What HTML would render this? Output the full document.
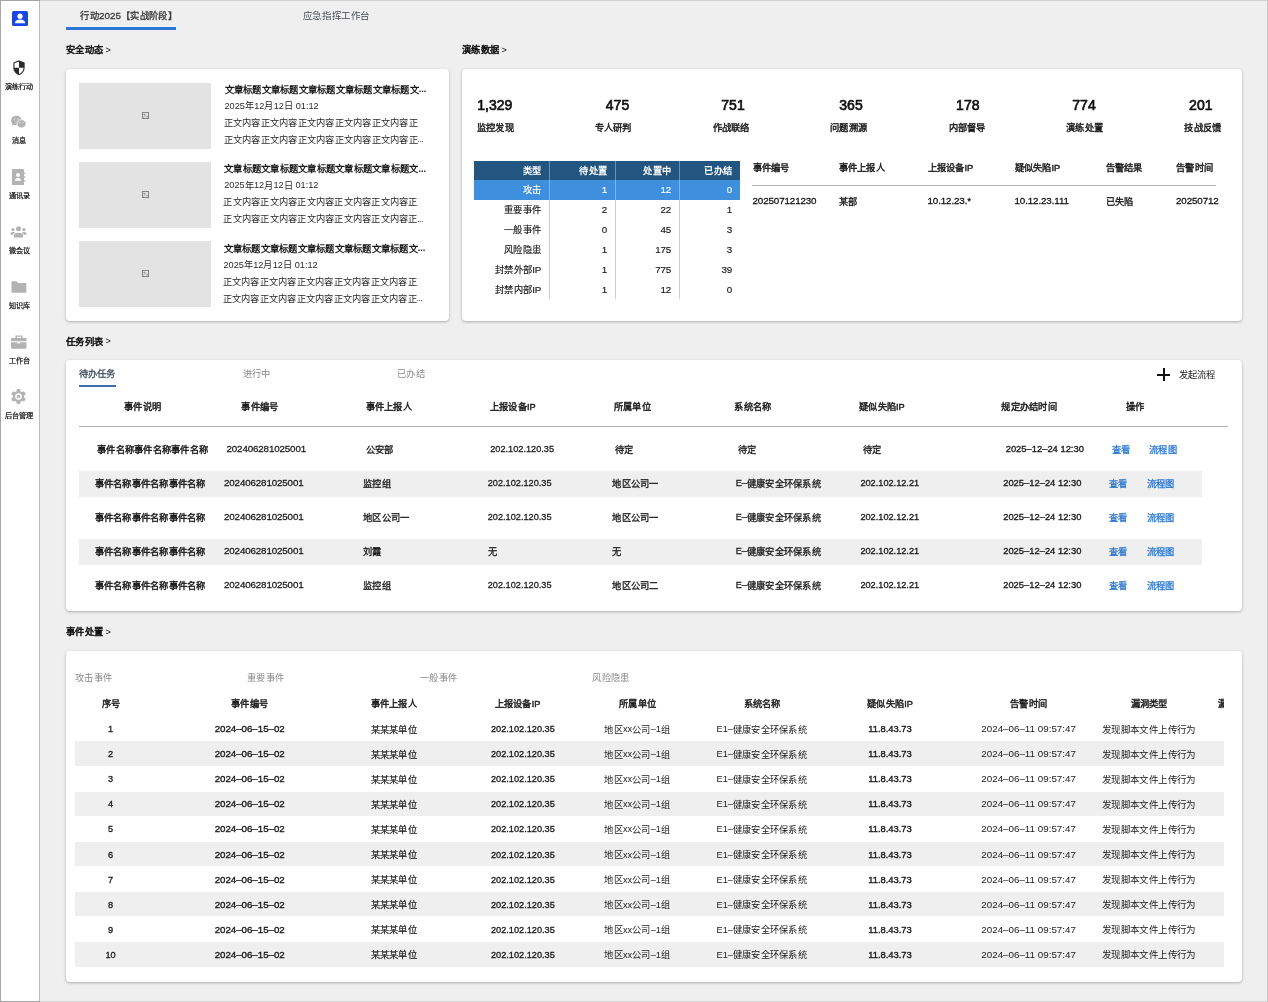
<!DOCTYPE html>
<html lang="zh-CN"><head><meta charset="utf-8"><style>
html,body{margin:0;padding:0;}
body{width:1268px;height:1002px;position:relative;overflow:hidden;font-family:"Liberation Sans",sans-serif;background:#efefef;}
.t{position:absolute;white-space:nowrap;line-height:16px;height:16px;font-size:9.2px;}
svg{display:block;}
</style></head><body>
<div id="root" style="position:absolute;left:0;top:0;width:1268px;height:1002px;will-change:transform;">
<div style="position:absolute;left:1px;top:1px;width:38px;height:1000px;background:#fff;"></div>
<div style="position:absolute;left:0px;top:0px;width:40px;height:1px;background:#a4a4a4;"></div>
<div style="position:absolute;left:0px;top:1001px;width:40px;height:1px;background:#a4a4a4;"></div>
<div style="position:absolute;left:0px;top:0px;width:1px;height:1002px;background:#a8a8a8;"></div>
<div style="position:absolute;left:39px;top:1px;width:1px;height:1000px;background:#bcbcbc;"></div>
<div style="position:absolute;left:40px;top:0px;width:1228px;height:1px;background:#d2d2d2;"></div>
<div style="position:absolute;left:40px;top:1001px;width:1228px;height:1px;background:#d6d6d6;"></div>
<div style="position:absolute;left:1267px;top:0px;width:1px;height:1002px;background:#c8c8c8;"></div>
<svg style="position:absolute;left:12px;top:11px" width="16" height="15" viewBox="0 0 16 15">
<rect x="0" y="0" width="16" height="15" rx="1.5" fill="#1947e6"/>
<circle cx="8" cy="5.2" r="2.6" fill="#fff"/>
<path d="M2.8 12.2 C3.2 9.4 5.4 8.6 8 8.6 C10.6 8.6 12.8 9.4 13.2 12.2 Z" fill="#fff"/>
</svg>
<svg style="position:absolute;left:12.6px;top:59.6px" width="12" height="15.7" viewBox="0 0 13 17">
<path d="M6.5 1 L12 3 L12 8.5 C12 12 9.5 14.5 6.5 16 C3.5 14.5 1 12 1 8.5 L1 3 Z" fill="#fff" stroke="#2b2b2b" stroke-width="1.2"/>
<path d="M6.5 1 L12 3 L12 8.5 L6.5 8.5 Z" fill="#2b2b2b"/>
<path d="M6.5 8.5 L6.5 16 C3.5 14.5 1 12 1 8.5 Z" fill="#2b2b2b"/>
</svg>
<svg style="position:absolute;left:10px;top:115px" width="17" height="14" viewBox="0 0 17 14">
<ellipse cx="6.3" cy="5.5" rx="5.3" ry="4.8" fill="#b3b3b3"/>
<path d="M2.5 8.5 L1.8 10.8 L4.5 9.3 Z" fill="#b3b3b3"/>
<ellipse cx="11.5" cy="8.8" rx="4.6" ry="4.1" fill="#b3b3b3" stroke="#fff" stroke-width="0.8"/>
<circle cx="4.3" cy="4" r="0.6" fill="#fff"/><circle cx="7.8" cy="4" r="0.6" fill="#fff"/>
<circle cx="10" cy="7.8" r="0.5" fill="#fff"/><circle cx="13" cy="7.8" r="0.5" fill="#fff"/>
</svg>
<svg style="position:absolute;left:12px;top:169px" width="14" height="16" viewBox="0 0 14 16">
<rect x="0" y="0" width="12" height="16" rx="0.8" fill="#b3b3b3"/>
<rect x="12" y="3.5" width="1.4" height="1.6" rx="0.6" fill="#b3b3b3"/>
<rect x="12" y="7.3" width="1.4" height="1.6" rx="0.6" fill="#b3b3b3"/>
<rect x="12" y="11" width="1.4" height="1.6" rx="0.6" fill="#b3b3b3"/>
<circle cx="6" cy="6" r="2" fill="#fff"/>
<path d="M2.8 11.8 C3 9.6 4.5 9 6 9 C7.5 9 9 9.6 9.2 11.8 Z" fill="#fff"/>
</svg>
<svg style="position:absolute;left:10px;top:225px" width="17" height="13" viewBox="0 0 17 13">
<circle cx="8.5" cy="3.8" r="2.5" fill="#b3b3b3"/>
<circle cx="3" cy="4.6" r="1.6" fill="#b3b3b3"/>
<circle cx="14" cy="4.6" r="1.6" fill="#b3b3b3"/>
<path d="M4 12.6 L4 10.2 C4 8.6 5.8 7.8 8.5 7.8 C11.2 7.8 13 8.6 13 10.2 L13 12.6 Z" fill="#b3b3b3"/>
<path d="M0.6 9.8 L0.6 8.4 C0.6 7.4 1.6 6.9 3.1 6.9 C4.1 6.9 4.8 7 5.3 7.3 C4 7.9 3.4 8.8 3.4 9.8 Z" fill="#b3b3b3"/>
<path d="M16.4 9.8 L16.4 8.4 C16.4 7.4 15.4 6.9 13.9 6.9 C12.9 6.9 12.2 7 11.7 7.3 C13 7.9 13.6 8.8 13.6 9.8 Z" fill="#b3b3b3"/>
</svg>
<svg style="position:absolute;left:11px;top:281px" width="16" height="12" viewBox="0 0 16 12">
<path d="M0.5 0.3 L5.5 0.3 L7 2 L15.3 2 L15.3 11.7 L0.5 11.7 Z" fill="#b3b3b3"/>
</svg>
<svg style="position:absolute;left:11px;top:335px" width="16" height="14" viewBox="0 0 16 14">
<path d="M4.5 3 L4.5 0.5 L11.5 0.5 L11.5 3 L10 3 L10 1.8 L6 1.8 L6 3 Z" fill="#b3b3b3"/>
<rect x="0" y="3" width="15.5" height="3.3" rx="0.5" fill="#b3b3b3"/>
<path d="M0 7.2 L6.3 7.2 L6.3 8.6 L9.2 8.6 L9.2 7.2 L15.5 7.2 L15.5 12.8 C15.5 13.4 15.1 13.8 14.5 13.8 L1 13.8 C0.4 13.8 0 13.4 0 12.8 Z" fill="#b3b3b3"/>
</svg>
<svg style="position:absolute;left:11px;top:389px" width="15" height="15" viewBox="-7.5 -7.5 15 15">
<g fill="#b3b3b3"><rect x="-1.9" y="-7.5" width="3.8" height="4" rx="0.9" transform="rotate(0)"/><rect x="-1.9" y="-7.5" width="3.8" height="4" rx="0.9" transform="rotate(60)"/><rect x="-1.9" y="-7.5" width="3.8" height="4" rx="0.9" transform="rotate(120)"/><rect x="-1.9" y="-7.5" width="3.8" height="4" rx="0.9" transform="rotate(180)"/><rect x="-1.9" y="-7.5" width="3.8" height="4" rx="0.9" transform="rotate(240)"/><rect x="-1.9" y="-7.5" width="3.8" height="4" rx="0.9" transform="rotate(300)"/>
<circle cx="0" cy="0" r="5.6"/></g>
<circle cx="0" cy="0" r="3.3" fill="#fff"/><circle cx="0" cy="0" r="1.8" fill="#b3b3b3"/>
</svg>
<div class="t" style="left:0.3000000000000007px;width:38px;text-align:center;top:77.5px;color:#111;-webkit-text-stroke:0.22px #111;"><span style="font-size:7.1px;letter-spacing:0.1px">演练行动</span></div>
<div class="t" style="left:0.3000000000000007px;width:38px;text-align:center;top:132.0px;color:#111;-webkit-text-stroke:0.22px #111;"><span style="font-size:7.1px;letter-spacing:0.1px">消息</span></div>
<div class="t" style="left:0.3000000000000007px;width:38px;text-align:center;top:187.0px;color:#111;-webkit-text-stroke:0.22px #111;"><span style="font-size:7.1px;letter-spacing:0.1px">通讯录</span></div>
<div class="t" style="left:0.3000000000000007px;width:38px;text-align:center;top:242.0px;color:#111;-webkit-text-stroke:0.22px #111;"><span style="font-size:7.1px;letter-spacing:0.1px">微会议</span></div>
<div class="t" style="left:0.3000000000000007px;width:38px;text-align:center;top:297.0px;color:#111;-webkit-text-stroke:0.22px #111;"><span style="font-size:7.1px;letter-spacing:0.1px">知识库</span></div>
<div class="t" style="left:0.3000000000000007px;width:38px;text-align:center;top:352.0px;color:#111;-webkit-text-stroke:0.22px #111;"><span style="font-size:7.1px;letter-spacing:0.1px">工作台</span></div>
<div class="t" style="left:0.3000000000000007px;width:38px;text-align:center;top:406.5px;color:#111;-webkit-text-stroke:0.22px #111;"><span style="font-size:7.1px;letter-spacing:0.1px">后台管理</span></div>
<div class="t" style="left:28.69999999999999px;width:200px;text-align:center;top:8.0px;color:#3a3a3a;-webkit-text-stroke:0.32px #3a3a3a;"><span style="font-size:9.25px;letter-spacing:0.35px">行动</span><span style="font-size:9.9px;letter-spacing:0px;position:relative;top:-0.5px">2025</span><span style="font-size:9.25px;letter-spacing:0.35px">【实战阶段】</span></div>
<div style="position:absolute;left:66px;top:27px;width:110px;height:3px;background:#2a77d6;"></div>
<div class="t" style="left:236.5px;width:200px;text-align:center;top:8.0px;color:#4a4f55;"><span style="font-size:9.5px;letter-spacing:-0.4px">应急指挥工作台</span></div>
<div class="t" style="left:66px;top:42.0px;color:#111;-webkit-text-stroke:0.52px #111;"><span style="font-size:9.25px;letter-spacing:0.25px">安全动态</span><span style="font-size:9.2px;letter-spacing:0px;position:relative;top:-0.5px"> <b style="font-weight:400;-webkit-text-stroke:0">&gt;</b></span></div>
<div class="t" style="left:462px;top:42.0px;color:#111;-webkit-text-stroke:0.52px #111;"><span style="font-size:9.25px;letter-spacing:0.25px">演练数据</span><span style="font-size:9.2px;letter-spacing:0px;position:relative;top:-0.5px"> <b style="font-weight:400;-webkit-text-stroke:0">&gt;</b></span></div>
<div class="t" style="left:66px;top:333.5px;color:#111;-webkit-text-stroke:0.52px #111;"><span style="font-size:9.25px;letter-spacing:0.25px">任务列表</span><span style="font-size:9.2px;letter-spacing:0px;position:relative;top:-0.5px"> <b style="font-weight:400;-webkit-text-stroke:0">&gt;</b></span></div>
<div class="t" style="left:66px;top:624.0px;color:#111;-webkit-text-stroke:0.52px #111;"><span style="font-size:9.25px;letter-spacing:0.25px">事件处置</span><span style="font-size:9.2px;letter-spacing:0px;position:relative;top:-0.5px"> <b style="font-weight:400;-webkit-text-stroke:0">&gt;</b></span></div>
<div style="position:absolute;left:66px;top:69px;width:383px;height:251.5px;background:#fff;border-radius:4px;box-shadow:0 1px 3px rgba(0,0,0,0.28);"></div>
<div style="position:absolute;left:462px;top:69px;width:780px;height:251.5px;background:#fff;border-radius:4px;box-shadow:0 1px 3px rgba(0,0,0,0.28);"></div>
<div style="position:absolute;left:66px;top:360px;width:1176px;height:250.5px;background:#fff;border-radius:4px;box-shadow:0 1px 3px rgba(0,0,0,0.28);"></div>
<div style="position:absolute;left:66px;top:651px;width:1176px;height:330.5px;background:#fff;border-radius:4px;box-shadow:0 1px 3px rgba(0,0,0,0.28);"></div>
<div style="position:absolute;left:79px;top:83px;width:132px;height:66px;background:#e3e3e3;"></div>
<svg style="position:absolute;left:142px;top:112px" width="7" height="7" viewBox="0 0 7 7"><rect x="0.45" y="0.45" width="6.1" height="6.1" fill="none" stroke="#7d7d7d" stroke-width="0.9"/><path d="M0.8 6 L4.2 2.3" fill="none" stroke="#9a9a9a" stroke-width="0.7"/><path d="M3.6 5.2 L6.2 5.2 L6.2 4.3 L4.6 4.3 Z" fill="#8a8a8a"/><circle cx="2.2" cy="2.4" r="0.75" fill="#7d7d7d"/></svg>
<div class="t" style="left:224.5px;top:81.7px;font-weight:700;color:#1a1a1a;"><span style="font-size:9.25px;letter-spacing:0.25px">文章标题文章标题文章标题文章标题文章标题文</span><span style="font-size:9.2px;letter-spacing:0px;position:relative;top:-0.5px">...</span></div>
<div class="t" style="left:224.5px;top:98.0px;color:#2a2a2a;"><span style="font-size:9.2px;letter-spacing:0px;position:relative;top:-0.5px">2025</span><span style="font-size:9.25px;letter-spacing:0.25px">年</span><span style="font-size:9.2px;letter-spacing:0px;position:relative;top:-0.5px">12</span><span style="font-size:9.25px;letter-spacing:0.25px">月</span><span style="font-size:9.2px;letter-spacing:0px;position:relative;top:-0.5px">12</span><span style="font-size:9.25px;letter-spacing:0.25px">日</span><span style="font-size:9.2px;letter-spacing:0px;position:relative;top:-0.5px"> 01:12</span></div>
<div class="t" style="left:223.7px;top:114.5px;color:#2a2a2a;"><span style="font-size:9.25px;letter-spacing:0.25px">正文内容正文内容正文内容正文内容正文内容正</span></div>
<div class="t" style="left:223.7px;top:131.5px;color:#2a2a2a;"><span style="font-size:9.25px;letter-spacing:0.25px">正文内容正文内容正文内容正文内容正文内容正</span></div>
<div class="t" style="left:417.5px;top:131.5px;color:#2a2a2a;"><span style="font-size:8.4px;letter-spacing:-0.4px;position:relative;top:-0.5px">...</span></div>
<div style="position:absolute;left:79px;top:162px;width:132px;height:66px;background:#e3e3e3;"></div>
<svg style="position:absolute;left:142px;top:191px" width="7" height="7" viewBox="0 0 7 7"><rect x="0.45" y="0.45" width="6.1" height="6.1" fill="none" stroke="#7d7d7d" stroke-width="0.9"/><path d="M0.8 6 L4.2 2.3" fill="none" stroke="#9a9a9a" stroke-width="0.7"/><path d="M3.6 5.2 L6.2 5.2 L6.2 4.3 L4.6 4.3 Z" fill="#8a8a8a"/><circle cx="2.2" cy="2.4" r="0.75" fill="#7d7d7d"/></svg>
<div class="t" style="left:224.2px;top:161.29999999999998px;font-weight:700;color:#1a1a1a;"><span style="font-size:9.25px;letter-spacing:0.25px">文章标题文章标题文章标题文章标题文章标题文</span><span style="font-size:9.2px;letter-spacing:0px;position:relative;top:-0.5px">...</span></div>
<div class="t" style="left:224.2px;top:177.6px;color:#2a2a2a;"><span style="font-size:9.2px;letter-spacing:0px;position:relative;top:-0.5px">2025</span><span style="font-size:9.25px;letter-spacing:0.25px">年</span><span style="font-size:9.2px;letter-spacing:0px;position:relative;top:-0.5px">12</span><span style="font-size:9.25px;letter-spacing:0.25px">月</span><span style="font-size:9.2px;letter-spacing:0px;position:relative;top:-0.5px">12</span><span style="font-size:9.25px;letter-spacing:0.25px">日</span><span style="font-size:9.2px;letter-spacing:0px;position:relative;top:-0.5px"> 01:12</span></div>
<div class="t" style="left:223.39999999999998px;top:194.1px;color:#2a2a2a;"><span style="font-size:9.25px;letter-spacing:0.25px">正文内容正文内容正文内容正文内容正文内容正</span></div>
<div class="t" style="left:223.39999999999998px;top:211.1px;color:#2a2a2a;"><span style="font-size:9.25px;letter-spacing:0.25px">正文内容正文内容正文内容正文内容正文内容正</span></div>
<div class="t" style="left:417.2px;top:211.1px;color:#2a2a2a;"><span style="font-size:8.4px;letter-spacing:-0.4px;position:relative;top:-0.5px">...</span></div>
<div style="position:absolute;left:79px;top:241px;width:132px;height:66px;background:#e3e3e3;"></div>
<svg style="position:absolute;left:142px;top:270px" width="7" height="7" viewBox="0 0 7 7"><rect x="0.45" y="0.45" width="6.1" height="6.1" fill="none" stroke="#7d7d7d" stroke-width="0.9"/><path d="M0.8 6 L4.2 2.3" fill="none" stroke="#9a9a9a" stroke-width="0.7"/><path d="M3.6 5.2 L6.2 5.2 L6.2 4.3 L4.6 4.3 Z" fill="#8a8a8a"/><circle cx="2.2" cy="2.4" r="0.75" fill="#7d7d7d"/></svg>
<div class="t" style="left:223.5px;top:240.89999999999998px;font-weight:700;color:#1a1a1a;"><span style="font-size:9.25px;letter-spacing:0.25px">文章标题文章标题文章标题文章标题文章标题文</span><span style="font-size:9.2px;letter-spacing:0px;position:relative;top:-0.5px">...</span></div>
<div class="t" style="left:223.5px;top:257.2px;color:#2a2a2a;"><span style="font-size:9.2px;letter-spacing:0px;position:relative;top:-0.5px">2025</span><span style="font-size:9.25px;letter-spacing:0.25px">年</span><span style="font-size:9.2px;letter-spacing:0px;position:relative;top:-0.5px">12</span><span style="font-size:9.25px;letter-spacing:0.25px">月</span><span style="font-size:9.2px;letter-spacing:0px;position:relative;top:-0.5px">12</span><span style="font-size:9.25px;letter-spacing:0.25px">日</span><span style="font-size:9.2px;letter-spacing:0px;position:relative;top:-0.5px"> 01:12</span></div>
<div class="t" style="left:222.7px;top:273.7px;color:#2a2a2a;"><span style="font-size:9.25px;letter-spacing:0.25px">正文内容正文内容正文内容正文内容正文内容正</span></div>
<div class="t" style="left:222.7px;top:290.7px;color:#2a2a2a;"><span style="font-size:9.25px;letter-spacing:0.25px">正文内容正文内容正文内容正文内容正文内容正</span></div>
<div class="t" style="left:416.5px;top:290.7px;color:#2a2a2a;"><span style="font-size:8.4px;letter-spacing:-0.4px;position:relative;top:-0.5px">...</span></div>
<div class="t" style="left:444.8px;width:100px;text-align:center;top:97.6px;color:#111;-webkit-text-stroke:0.67px #111;"><span style="font-size:14px;letter-spacing:0px;position:relative;top:-0.5px">1,329</span></div>
<div class="t" style="left:445.3px;width:100px;text-align:center;top:119.5px;color:#1a1a1a;-webkit-text-stroke:0.42px #1a1a1a;"><span style="font-size:9.25px;letter-spacing:0.25px">监控发现</span></div>
<div class="t" style="left:567.5px;width:100px;text-align:center;top:97.6px;color:#111;-webkit-text-stroke:0.67px #111;"><span style="font-size:14px;letter-spacing:0px;position:relative;top:-0.5px">475</span></div>
<div class="t" style="left:563.0px;width:100px;text-align:center;top:119.5px;color:#1a1a1a;-webkit-text-stroke:0.42px #1a1a1a;"><span style="font-size:9.25px;letter-spacing:0.25px">专人研判</span></div>
<div class="t" style="left:683.0px;width:100px;text-align:center;top:97.6px;color:#111;-webkit-text-stroke:0.67px #111;"><span style="font-size:14px;letter-spacing:0px;position:relative;top:-0.5px">751</span></div>
<div class="t" style="left:681.0px;width:100px;text-align:center;top:119.5px;color:#1a1a1a;-webkit-text-stroke:0.42px #1a1a1a;"><span style="font-size:9.25px;letter-spacing:0.25px">作战联络</span></div>
<div class="t" style="left:801.0px;width:100px;text-align:center;top:97.6px;color:#111;-webkit-text-stroke:0.67px #111;"><span style="font-size:14px;letter-spacing:0px;position:relative;top:-0.5px">365</span></div>
<div class="t" style="left:798.5px;width:100px;text-align:center;top:119.5px;color:#1a1a1a;-webkit-text-stroke:0.42px #1a1a1a;"><span style="font-size:9.25px;letter-spacing:0.25px">问题溯源</span></div>
<div class="t" style="left:917.8px;width:100px;text-align:center;top:97.6px;color:#111;-webkit-text-stroke:0.67px #111;"><span style="font-size:14px;letter-spacing:0px;position:relative;top:-0.5px">178</span></div>
<div class="t" style="left:917.0px;width:100px;text-align:center;top:119.5px;color:#1a1a1a;-webkit-text-stroke:0.42px #1a1a1a;"><span style="font-size:9.25px;letter-spacing:0.25px">内部督导</span></div>
<div class="t" style="left:1034.0px;width:100px;text-align:center;top:97.6px;color:#111;-webkit-text-stroke:0.67px #111;"><span style="font-size:14px;letter-spacing:0px;position:relative;top:-0.5px">774</span></div>
<div class="t" style="left:1034.7px;width:100px;text-align:center;top:119.5px;color:#1a1a1a;-webkit-text-stroke:0.42px #1a1a1a;"><span style="font-size:9.25px;letter-spacing:0.25px">演练处置</span></div>
<div class="t" style="left:1150.8px;width:100px;text-align:center;top:97.6px;color:#111;-webkit-text-stroke:0.67px #111;"><span style="font-size:14px;letter-spacing:0px;position:relative;top:-0.5px">201</span></div>
<div class="t" style="left:1152.8px;width:100px;text-align:center;top:119.5px;color:#1a1a1a;-webkit-text-stroke:0.42px #1a1a1a;"><span style="font-size:9.25px;letter-spacing:0.25px">技战反馈</span></div>
<div style="position:absolute;left:474px;top:161px;width:266px;height:19px;background:#22557f;"></div>
<div style="position:absolute;left:474px;top:180px;width:266px;height:20px;background:#3f8fdf;"></div>
<div style="position:absolute;left:549px;top:161px;width:1px;height:19px;background:#6f8fab;"></div>
<div style="position:absolute;left:549px;top:180px;width:1px;height:20px;background:#86b7ea;"></div>
<div style="position:absolute;left:549px;top:200px;width:1px;height:99px;background:#cfcfcf;"></div>
<div style="position:absolute;left:615px;top:161px;width:1px;height:19px;background:#6f8fab;"></div>
<div style="position:absolute;left:615px;top:180px;width:1px;height:20px;background:#86b7ea;"></div>
<div style="position:absolute;left:615px;top:200px;width:1px;height:99px;background:#cfcfcf;"></div>
<div style="position:absolute;left:679px;top:161px;width:1px;height:19px;background:#6f8fab;"></div>
<div style="position:absolute;left:679px;top:180px;width:1px;height:20px;background:#86b7ea;"></div>
<div style="position:absolute;left:679px;top:200px;width:1px;height:99px;background:#cfcfcf;"></div>
<div class="t" style="left:471px;width:70px;text-align:right;top:162.5px;font-weight:700;color:#fff;"><span style="font-size:9.25px;letter-spacing:0.25px">类型</span></div>
<div class="t" style="left:537px;width:70px;text-align:right;top:162.5px;font-weight:700;color:#fff;"><span style="font-size:9.25px;letter-spacing:0.25px">待处置</span></div>
<div class="t" style="left:601px;width:70px;text-align:right;top:162.5px;font-weight:700;color:#fff;"><span style="font-size:9.25px;letter-spacing:0.25px">处置中</span></div>
<div class="t" style="left:662px;width:70px;text-align:right;top:162.5px;font-weight:700;color:#fff;"><span style="font-size:9.25px;letter-spacing:0.25px">已办结</span></div>
<div class="t" style="left:471px;width:70px;text-align:right;top:182.0px;color:#fff;-webkit-text-stroke:0.17px #fff;"><span style="font-size:9.25px;letter-spacing:0.25px">攻击</span></div>
<div class="t" style="left:537px;width:70px;text-align:right;top:182.0px;color:#fff;-webkit-text-stroke:0.17px #fff;"><span style="font-size:9.8px;letter-spacing:-0.2px;position:relative;top:-0.5px">1</span></div>
<div class="t" style="left:601px;width:70px;text-align:right;top:182.0px;color:#fff;-webkit-text-stroke:0.17px #fff;"><span style="font-size:9.8px;letter-spacing:-0.2px;position:relative;top:-0.5px">12</span></div>
<div class="t" style="left:662px;width:70px;text-align:right;top:182.0px;color:#fff;-webkit-text-stroke:0.17px #fff;"><span style="font-size:9.8px;letter-spacing:-0.2px;position:relative;top:-0.5px">0</span></div>
<div class="t" style="left:471px;width:70px;text-align:right;top:202.0px;color:#1a1a1a;-webkit-text-stroke:0.17px #1a1a1a;"><span style="font-size:9.25px;letter-spacing:0.25px">重要事件</span></div>
<div class="t" style="left:537px;width:70px;text-align:right;top:202.0px;color:#1a1a1a;-webkit-text-stroke:0.17px #1a1a1a;"><span style="font-size:9.8px;letter-spacing:-0.2px;position:relative;top:-0.5px">2</span></div>
<div class="t" style="left:601px;width:70px;text-align:right;top:202.0px;color:#1a1a1a;-webkit-text-stroke:0.17px #1a1a1a;"><span style="font-size:9.8px;letter-spacing:-0.2px;position:relative;top:-0.5px">22</span></div>
<div class="t" style="left:662px;width:70px;text-align:right;top:202.0px;color:#1a1a1a;-webkit-text-stroke:0.17px #1a1a1a;"><span style="font-size:9.8px;letter-spacing:-0.2px;position:relative;top:-0.5px">1</span></div>
<div class="t" style="left:471px;width:70px;text-align:right;top:222.0px;color:#1a1a1a;-webkit-text-stroke:0.17px #1a1a1a;"><span style="font-size:9.25px;letter-spacing:0.25px">一般事件</span></div>
<div class="t" style="left:537px;width:70px;text-align:right;top:222.0px;color:#1a1a1a;-webkit-text-stroke:0.17px #1a1a1a;"><span style="font-size:9.8px;letter-spacing:-0.2px;position:relative;top:-0.5px">0</span></div>
<div class="t" style="left:601px;width:70px;text-align:right;top:222.0px;color:#1a1a1a;-webkit-text-stroke:0.17px #1a1a1a;"><span style="font-size:9.8px;letter-spacing:-0.2px;position:relative;top:-0.5px">45</span></div>
<div class="t" style="left:662px;width:70px;text-align:right;top:222.0px;color:#1a1a1a;-webkit-text-stroke:0.17px #1a1a1a;"><span style="font-size:9.8px;letter-spacing:-0.2px;position:relative;top:-0.5px">3</span></div>
<div class="t" style="left:471px;width:70px;text-align:right;top:242.0px;color:#1a1a1a;-webkit-text-stroke:0.17px #1a1a1a;"><span style="font-size:9.25px;letter-spacing:0.25px">风险隐患</span></div>
<div class="t" style="left:537px;width:70px;text-align:right;top:242.0px;color:#1a1a1a;-webkit-text-stroke:0.17px #1a1a1a;"><span style="font-size:9.8px;letter-spacing:-0.2px;position:relative;top:-0.5px">1</span></div>
<div class="t" style="left:601px;width:70px;text-align:right;top:242.0px;color:#1a1a1a;-webkit-text-stroke:0.17px #1a1a1a;"><span style="font-size:9.8px;letter-spacing:-0.2px;position:relative;top:-0.5px">175</span></div>
<div class="t" style="left:662px;width:70px;text-align:right;top:242.0px;color:#1a1a1a;-webkit-text-stroke:0.17px #1a1a1a;"><span style="font-size:9.8px;letter-spacing:-0.2px;position:relative;top:-0.5px">3</span></div>
<div class="t" style="left:471px;width:70px;text-align:right;top:262.0px;color:#1a1a1a;-webkit-text-stroke:0.17px #1a1a1a;"><span style="font-size:9.25px;letter-spacing:0.25px">封禁外部</span><span style="font-size:9.8px;letter-spacing:-0.2px;position:relative;top:-0.5px">IP</span></div>
<div class="t" style="left:537px;width:70px;text-align:right;top:262.0px;color:#1a1a1a;-webkit-text-stroke:0.17px #1a1a1a;"><span style="font-size:9.8px;letter-spacing:-0.2px;position:relative;top:-0.5px">1</span></div>
<div class="t" style="left:601px;width:70px;text-align:right;top:262.0px;color:#1a1a1a;-webkit-text-stroke:0.17px #1a1a1a;"><span style="font-size:9.8px;letter-spacing:-0.2px;position:relative;top:-0.5px">775</span></div>
<div class="t" style="left:662px;width:70px;text-align:right;top:262.0px;color:#1a1a1a;-webkit-text-stroke:0.17px #1a1a1a;"><span style="font-size:9.8px;letter-spacing:-0.2px;position:relative;top:-0.5px">39</span></div>
<div class="t" style="left:471px;width:70px;text-align:right;top:282.0px;color:#1a1a1a;-webkit-text-stroke:0.17px #1a1a1a;"><span style="font-size:9.25px;letter-spacing:0.25px">封禁内部</span><span style="font-size:9.8px;letter-spacing:-0.2px;position:relative;top:-0.5px">IP</span></div>
<div class="t" style="left:537px;width:70px;text-align:right;top:282.0px;color:#1a1a1a;-webkit-text-stroke:0.17px #1a1a1a;"><span style="font-size:9.8px;letter-spacing:-0.2px;position:relative;top:-0.5px">1</span></div>
<div class="t" style="left:601px;width:70px;text-align:right;top:282.0px;color:#1a1a1a;-webkit-text-stroke:0.17px #1a1a1a;"><span style="font-size:9.8px;letter-spacing:-0.2px;position:relative;top:-0.5px">12</span></div>
<div class="t" style="left:662px;width:70px;text-align:right;top:282.0px;color:#1a1a1a;-webkit-text-stroke:0.17px #1a1a1a;"><span style="font-size:9.8px;letter-spacing:-0.2px;position:relative;top:-0.5px">0</span></div>
<div class="t" style="left:752.5px;top:160.0px;color:#1a1a1a;-webkit-text-stroke:0.42px #1a1a1a;"><span style="font-size:9.25px;letter-spacing:0.25px">事件编号</span></div>
<div class="t" style="left:752.5px;top:193.5px;color:#111;-webkit-text-stroke:0.27px #111;"><span style="font-size:9.8px;letter-spacing:-0.12px;position:relative;top:-0.5px">202507121230</span></div>
<div class="t" style="left:838.5px;top:160.0px;color:#1a1a1a;-webkit-text-stroke:0.42px #1a1a1a;"><span style="font-size:9.25px;letter-spacing:0.25px">事件上报人</span></div>
<div class="t" style="left:838.5px;top:193.5px;color:#111;-webkit-text-stroke:0.27px #111;"><span style="font-size:9.25px;letter-spacing:0.25px">某部</span></div>
<div class="t" style="left:927.5px;top:160.0px;color:#1a1a1a;-webkit-text-stroke:0.42px #1a1a1a;"><span style="font-size:9.25px;letter-spacing:0.25px">上报设备</span><span style="font-size:9.2px;letter-spacing:0px;position:relative;top:-0.5px">IP</span></div>
<div class="t" style="left:927.5px;top:193.5px;color:#111;-webkit-text-stroke:0.27px #111;"><span style="font-size:9.8px;letter-spacing:-0.12px;position:relative;top:-0.5px">10.12.23.*</span></div>
<div class="t" style="left:1014.5px;top:160.0px;color:#1a1a1a;-webkit-text-stroke:0.42px #1a1a1a;"><span style="font-size:9.25px;letter-spacing:0.25px">疑似失陷</span><span style="font-size:9.2px;letter-spacing:0px;position:relative;top:-0.5px">IP</span></div>
<div class="t" style="left:1014.5px;top:193.5px;color:#111;-webkit-text-stroke:0.27px #111;"><span style="font-size:9.8px;letter-spacing:-0.12px;position:relative;top:-0.5px">10.12.23.111</span></div>
<div class="t" style="left:1105.5px;top:160.0px;color:#1a1a1a;-webkit-text-stroke:0.42px #1a1a1a;"><span style="font-size:9.25px;letter-spacing:0.25px">告警结果</span></div>
<div class="t" style="left:1105.5px;top:193.5px;color:#111;-webkit-text-stroke:0.27px #111;"><span style="font-size:9.25px;letter-spacing:0.25px">已失陷</span></div>
<div class="t" style="left:1176px;top:160.0px;color:#1a1a1a;-webkit-text-stroke:0.42px #1a1a1a;"><span style="font-size:9.25px;letter-spacing:0.25px">告警时间</span></div>
<div class="t" style="left:1176px;top:193.5px;color:#111;-webkit-text-stroke:0.27px #111;"><span style="font-size:9.8px;letter-spacing:-0.12px;position:relative;top:-0.5px">20250712</span></div>
<div style="position:absolute;left:752px;top:185px;width:464px;height:1px;background:#b3b3b3;"></div>
<div class="t" style="left:78.6px;top:365.5px;color:#3b4b5e;-webkit-text-stroke:0.27px #3b4b5e;"><span style="font-size:9.25px;letter-spacing:0.25px">待办任务</span></div>
<div style="position:absolute;left:79px;top:385px;width:37px;height:2px;background:#3d6fae;"></div>
<div class="t" style="left:242.5px;top:365.5px;color:#888;"><span style="font-size:9.25px;letter-spacing:0.25px">进行中</span></div>
<div class="t" style="left:397px;top:365.5px;color:#888;"><span style="font-size:9.25px;letter-spacing:0.25px">已办结</span></div>
<div style="position:absolute;left:1157px;top:374px;width:13px;height:2px;background:#111;"></div>
<div style="position:absolute;left:1162.5px;top:368px;width:2px;height:13px;background:#111;"></div>
<div class="t" style="left:1178.5px;top:367.0px;color:#222;"><span style="font-size:9.25px;letter-spacing:0.25px">发起流程</span></div>
<div class="t" style="left:124px;top:399.0px;color:#1a1a1a;-webkit-text-stroke:0.42px #1a1a1a;"><span style="font-size:9.25px;letter-spacing:0.25px">事件说明</span></div>
<div class="t" style="left:241.3px;top:399.0px;color:#1a1a1a;-webkit-text-stroke:0.42px #1a1a1a;"><span style="font-size:9.25px;letter-spacing:0.25px">事件编号</span></div>
<div class="t" style="left:365.6px;top:399.0px;color:#1a1a1a;-webkit-text-stroke:0.42px #1a1a1a;"><span style="font-size:9.25px;letter-spacing:0.25px">事件上报人</span></div>
<div class="t" style="left:489.9px;top:399.0px;color:#1a1a1a;-webkit-text-stroke:0.42px #1a1a1a;"><span style="font-size:9.25px;letter-spacing:0.25px">上报设备</span><span style="font-size:9.2px;letter-spacing:0px;position:relative;top:-0.5px">IP</span></div>
<div class="t" style="left:613.9px;top:399.0px;color:#1a1a1a;-webkit-text-stroke:0.42px #1a1a1a;"><span style="font-size:9.25px;letter-spacing:0.25px">所属单位</span></div>
<div class="t" style="left:734.3px;top:399.0px;color:#1a1a1a;-webkit-text-stroke:0.42px #1a1a1a;"><span style="font-size:9.25px;letter-spacing:0.25px">系统名称</span></div>
<div class="t" style="left:859px;top:399.0px;color:#1a1a1a;-webkit-text-stroke:0.42px #1a1a1a;"><span style="font-size:9.25px;letter-spacing:0.25px">疑似失陷</span><span style="font-size:9.2px;letter-spacing:0px;position:relative;top:-0.5px">IP</span></div>
<div class="t" style="left:1001.3px;top:399.0px;color:#1a1a1a;-webkit-text-stroke:0.42px #1a1a1a;"><span style="font-size:9.25px;letter-spacing:0.25px">规定办结时间</span></div>
<div class="t" style="left:1126px;top:399.0px;color:#1a1a1a;-webkit-text-stroke:0.42px #1a1a1a;"><span style="font-size:9.25px;letter-spacing:0.25px">操作</span></div>
<div style="position:absolute;left:79px;top:426px;width:1149px;height:1px;background:#b3b3b3;"></div>
<div style="position:absolute;left:79px;top:471px;width:1123px;height:26px;background:#efefef;"></div>
<div style="position:absolute;left:79px;top:539px;width:1123px;height:26px;background:#efefef;"></div>
<div class="t" style="left:97.1px;top:441.5px;color:#1a1a1a;-webkit-text-stroke:0.42px #1a1a1a;"><span style="font-size:9.25px;letter-spacing:0.25px">事件名称事件名称事件名称</span></div>
<div class="t" style="left:226.5px;top:441.5px;color:#1a1a1a;-webkit-text-stroke:0.27px #1a1a1a;"><span style="font-size:9.8px;letter-spacing:-0.15px;position:relative;top:-0.5px">202406281025001</span></div>
<div class="t" style="left:365.5px;top:441.5px;color:#1a1a1a;-webkit-text-stroke:0.32px #1a1a1a;"><span style="font-size:9.25px;letter-spacing:0.25px">公安部</span></div>
<div class="t" style="left:490.2px;top:441.5px;color:#1a1a1a;-webkit-text-stroke:0.27px #1a1a1a;"><span style="font-size:9.2px;letter-spacing:0px;position:relative;top:-0.5px">202.102.120.35</span></div>
<div class="t" style="left:614.8px;top:441.5px;color:#1a1a1a;-webkit-text-stroke:0.32px #1a1a1a;"><span style="font-size:9.25px;letter-spacing:0.25px">待定</span></div>
<div class="t" style="left:738.2px;top:441.5px;color:#1a1a1a;-webkit-text-stroke:0.27px #1a1a1a;"><span style="font-size:9.25px;letter-spacing:0.25px">待定</span></div>
<div class="t" style="left:862.9px;top:441.5px;color:#1a1a1a;-webkit-text-stroke:0.32px #1a1a1a;"><span style="font-size:9.25px;letter-spacing:0.25px">待定</span></div>
<div class="t" style="left:1005.7px;top:441.5px;color:#1a1a1a;-webkit-text-stroke:0.34px #1a1a1a;"><span style="font-size:9.4px;letter-spacing:0px;position:relative;top:-0.5px">2025–12–24 12:30</span></div>
<div class="t" style="left:1111.7px;top:441.5px;color:#2a78d0;-webkit-text-stroke:0.27px #2a78d0;"><span style="font-size:9.25px;letter-spacing:0.25px">查看</span></div>
<div class="t" style="left:1149.1px;top:441.5px;color:#2a78d0;-webkit-text-stroke:0.27px #2a78d0;"><span style="font-size:9.25px;letter-spacing:0.25px">流程图</span></div>
<div class="t" style="left:94.6px;top:475.5px;color:#1a1a1a;-webkit-text-stroke:0.42px #1a1a1a;"><span style="font-size:9.25px;letter-spacing:0.25px">事件名称事件名称事件名称</span></div>
<div class="t" style="left:224px;top:475.5px;color:#1a1a1a;-webkit-text-stroke:0.27px #1a1a1a;"><span style="font-size:9.8px;letter-spacing:-0.15px;position:relative;top:-0.5px">202406281025001</span></div>
<div class="t" style="left:363px;top:475.5px;color:#1a1a1a;-webkit-text-stroke:0.32px #1a1a1a;"><span style="font-size:9.25px;letter-spacing:0.25px">监控组</span></div>
<div class="t" style="left:487.7px;top:475.5px;color:#1a1a1a;-webkit-text-stroke:0.27px #1a1a1a;"><span style="font-size:9.2px;letter-spacing:0px;position:relative;top:-0.5px">202.102.120.35</span></div>
<div class="t" style="left:612.3px;top:475.5px;color:#1a1a1a;-webkit-text-stroke:0.32px #1a1a1a;"><span style="font-size:9.25px;letter-spacing:0.25px">地区公司一</span></div>
<div class="t" style="left:735.7px;top:475.5px;color:#1a1a1a;-webkit-text-stroke:0.27px #1a1a1a;"><span style="font-size:9.2px;letter-spacing:0px;position:relative;top:-0.5px">E–</span><span style="font-size:9.25px;letter-spacing:0.25px">健康安全环保系统</span></div>
<div class="t" style="left:860.4px;top:475.5px;color:#1a1a1a;-webkit-text-stroke:0.32px #1a1a1a;"><span style="font-size:9.2px;letter-spacing:0px;position:relative;top:-0.5px">202.102.12.21</span></div>
<div class="t" style="left:1003.2px;top:475.5px;color:#1a1a1a;-webkit-text-stroke:0.34px #1a1a1a;"><span style="font-size:9.4px;letter-spacing:0px;position:relative;top:-0.5px">2025–12–24 12:30</span></div>
<div class="t" style="left:1109.2px;top:475.5px;color:#2a78d0;-webkit-text-stroke:0.27px #2a78d0;"><span style="font-size:9.25px;letter-spacing:0.25px">查看</span></div>
<div class="t" style="left:1146.6px;top:475.5px;color:#2a78d0;-webkit-text-stroke:0.27px #2a78d0;"><span style="font-size:9.25px;letter-spacing:0.25px">流程图</span></div>
<div class="t" style="left:94.6px;top:509.5px;color:#1a1a1a;-webkit-text-stroke:0.42px #1a1a1a;"><span style="font-size:9.25px;letter-spacing:0.25px">事件名称事件名称事件名称</span></div>
<div class="t" style="left:224px;top:509.5px;color:#1a1a1a;-webkit-text-stroke:0.27px #1a1a1a;"><span style="font-size:9.8px;letter-spacing:-0.15px;position:relative;top:-0.5px">202406281025001</span></div>
<div class="t" style="left:363px;top:509.5px;color:#1a1a1a;-webkit-text-stroke:0.32px #1a1a1a;"><span style="font-size:9.25px;letter-spacing:0.25px">地区公司一</span></div>
<div class="t" style="left:487.7px;top:509.5px;color:#1a1a1a;-webkit-text-stroke:0.27px #1a1a1a;"><span style="font-size:9.2px;letter-spacing:0px;position:relative;top:-0.5px">202.102.120.35</span></div>
<div class="t" style="left:612.3px;top:509.5px;color:#1a1a1a;-webkit-text-stroke:0.32px #1a1a1a;"><span style="font-size:9.25px;letter-spacing:0.25px">地区公司一</span></div>
<div class="t" style="left:735.7px;top:509.5px;color:#1a1a1a;-webkit-text-stroke:0.27px #1a1a1a;"><span style="font-size:9.2px;letter-spacing:0px;position:relative;top:-0.5px">E–</span><span style="font-size:9.25px;letter-spacing:0.25px">健康安全环保系统</span></div>
<div class="t" style="left:860.4px;top:509.5px;color:#1a1a1a;-webkit-text-stroke:0.32px #1a1a1a;"><span style="font-size:9.2px;letter-spacing:0px;position:relative;top:-0.5px">202.102.12.21</span></div>
<div class="t" style="left:1003.2px;top:509.5px;color:#1a1a1a;-webkit-text-stroke:0.34px #1a1a1a;"><span style="font-size:9.4px;letter-spacing:0px;position:relative;top:-0.5px">2025–12–24 12:30</span></div>
<div class="t" style="left:1109.2px;top:509.5px;color:#2a78d0;-webkit-text-stroke:0.27px #2a78d0;"><span style="font-size:9.25px;letter-spacing:0.25px">查看</span></div>
<div class="t" style="left:1146.6px;top:509.5px;color:#2a78d0;-webkit-text-stroke:0.27px #2a78d0;"><span style="font-size:9.25px;letter-spacing:0.25px">流程图</span></div>
<div class="t" style="left:94.6px;top:543.5px;color:#1a1a1a;-webkit-text-stroke:0.42px #1a1a1a;"><span style="font-size:9.25px;letter-spacing:0.25px">事件名称事件名称事件名称</span></div>
<div class="t" style="left:224px;top:543.5px;color:#1a1a1a;-webkit-text-stroke:0.27px #1a1a1a;"><span style="font-size:9.8px;letter-spacing:-0.15px;position:relative;top:-0.5px">202406281025001</span></div>
<div class="t" style="left:363px;top:543.5px;color:#1a1a1a;-webkit-text-stroke:0.32px #1a1a1a;"><span style="font-size:9.25px;letter-spacing:0.25px">刘霞</span></div>
<div class="t" style="left:487.7px;top:543.5px;color:#1a1a1a;-webkit-text-stroke:0.27px #1a1a1a;"><span style="font-size:9.25px;letter-spacing:0.25px">无</span></div>
<div class="t" style="left:612.3px;top:543.5px;color:#1a1a1a;-webkit-text-stroke:0.32px #1a1a1a;"><span style="font-size:9.25px;letter-spacing:0.25px">无</span></div>
<div class="t" style="left:735.7px;top:543.5px;color:#1a1a1a;-webkit-text-stroke:0.27px #1a1a1a;"><span style="font-size:9.2px;letter-spacing:0px;position:relative;top:-0.5px">E–</span><span style="font-size:9.25px;letter-spacing:0.25px">健康安全环保系统</span></div>
<div class="t" style="left:860.4px;top:543.5px;color:#1a1a1a;-webkit-text-stroke:0.32px #1a1a1a;"><span style="font-size:9.2px;letter-spacing:0px;position:relative;top:-0.5px">202.102.12.21</span></div>
<div class="t" style="left:1003.2px;top:543.5px;color:#1a1a1a;-webkit-text-stroke:0.34px #1a1a1a;"><span style="font-size:9.4px;letter-spacing:0px;position:relative;top:-0.5px">2025–12–24 12:30</span></div>
<div class="t" style="left:1109.2px;top:543.5px;color:#2a78d0;-webkit-text-stroke:0.27px #2a78d0;"><span style="font-size:9.25px;letter-spacing:0.25px">查看</span></div>
<div class="t" style="left:1146.6px;top:543.5px;color:#2a78d0;-webkit-text-stroke:0.27px #2a78d0;"><span style="font-size:9.25px;letter-spacing:0.25px">流程图</span></div>
<div class="t" style="left:94.6px;top:577.5px;color:#1a1a1a;-webkit-text-stroke:0.42px #1a1a1a;"><span style="font-size:9.25px;letter-spacing:0.25px">事件名称事件名称事件名称</span></div>
<div class="t" style="left:224px;top:577.5px;color:#1a1a1a;-webkit-text-stroke:0.27px #1a1a1a;"><span style="font-size:9.8px;letter-spacing:-0.15px;position:relative;top:-0.5px">202406281025001</span></div>
<div class="t" style="left:363px;top:577.5px;color:#1a1a1a;-webkit-text-stroke:0.32px #1a1a1a;"><span style="font-size:9.25px;letter-spacing:0.25px">监控组</span></div>
<div class="t" style="left:487.7px;top:577.5px;color:#1a1a1a;-webkit-text-stroke:0.27px #1a1a1a;"><span style="font-size:9.2px;letter-spacing:0px;position:relative;top:-0.5px">202.102.120.35</span></div>
<div class="t" style="left:612.3px;top:577.5px;color:#1a1a1a;-webkit-text-stroke:0.32px #1a1a1a;"><span style="font-size:9.25px;letter-spacing:0.25px">地区公司二</span></div>
<div class="t" style="left:735.7px;top:577.5px;color:#1a1a1a;-webkit-text-stroke:0.27px #1a1a1a;"><span style="font-size:9.2px;letter-spacing:0px;position:relative;top:-0.5px">E–</span><span style="font-size:9.25px;letter-spacing:0.25px">健康安全环保系统</span></div>
<div class="t" style="left:860.4px;top:577.5px;color:#1a1a1a;-webkit-text-stroke:0.32px #1a1a1a;"><span style="font-size:9.2px;letter-spacing:0px;position:relative;top:-0.5px">202.102.12.21</span></div>
<div class="t" style="left:1003.2px;top:577.5px;color:#1a1a1a;-webkit-text-stroke:0.34px #1a1a1a;"><span style="font-size:9.4px;letter-spacing:0px;position:relative;top:-0.5px">2025–12–24 12:30</span></div>
<div class="t" style="left:1109.2px;top:577.5px;color:#2a78d0;-webkit-text-stroke:0.27px #2a78d0;"><span style="font-size:9.25px;letter-spacing:0.25px">查看</span></div>
<div class="t" style="left:1146.6px;top:577.5px;color:#2a78d0;-webkit-text-stroke:0.27px #2a78d0;"><span style="font-size:9.25px;letter-spacing:0.25px">流程图</span></div>
<div class="t" style="left:75px;top:669.5px;color:#8a8a8a;"><span style="font-size:9.25px;letter-spacing:0.25px">攻击事件</span></div>
<div class="t" style="left:247px;top:669.5px;color:#8a8a8a;"><span style="font-size:9.25px;letter-spacing:0.25px">重要事件</span></div>
<div class="t" style="left:420px;top:669.5px;color:#8a8a8a;"><span style="font-size:9.25px;letter-spacing:0.25px">一般事件</span></div>
<div class="t" style="left:592.3px;top:669.5px;color:#8a8a8a;"><span style="font-size:9.25px;letter-spacing:0.25px">风险隐患</span></div>
<div style="position:absolute;left:75px;top:690px;width:1149px;height:280px;overflow:hidden;">
<div class="t" style="left:-34.0px;width:140px;text-align:center;top:6.0px;color:#1a1a1a;-webkit-text-stroke:0.42px #1a1a1a;"><span style="font-size:9.25px;letter-spacing:0.25px">序号</span></div>
<div class="t" style="left:104.6px;width:140px;text-align:center;top:6.0px;color:#1a1a1a;-webkit-text-stroke:0.42px #1a1a1a;"><span style="font-size:9.25px;letter-spacing:0.25px">事件编号</span></div>
<div class="t" style="left:248.7px;width:140px;text-align:center;top:6.0px;color:#1a1a1a;-webkit-text-stroke:0.42px #1a1a1a;"><span style="font-size:9.25px;letter-spacing:0.25px">事件上报人</span></div>
<div class="t" style="left:372.5px;width:140px;text-align:center;top:6.0px;color:#1a1a1a;-webkit-text-stroke:0.42px #1a1a1a;"><span style="font-size:9.25px;letter-spacing:0.25px">上报设备</span><span style="font-size:9.2px;letter-spacing:0px;position:relative;top:-0.5px">IP</span></div>
<div class="t" style="left:492.70000000000005px;width:140px;text-align:center;top:6.0px;color:#1a1a1a;-webkit-text-stroke:0.42px #1a1a1a;"><span style="font-size:9.25px;letter-spacing:0.25px">所属单位</span></div>
<div class="t" style="left:617.0px;width:140px;text-align:center;top:6.0px;color:#1a1a1a;-webkit-text-stroke:0.42px #1a1a1a;"><span style="font-size:9.25px;letter-spacing:0.25px">系统名称</span></div>
<div class="t" style="left:745.0px;width:140px;text-align:center;top:6.0px;color:#1a1a1a;-webkit-text-stroke:0.42px #1a1a1a;"><span style="font-size:9.25px;letter-spacing:0.25px">疑似失陷</span><span style="font-size:9.2px;letter-spacing:0px;position:relative;top:-0.5px">IP</span></div>
<div class="t" style="left:883.5px;width:140px;text-align:center;top:6.0px;color:#1a1a1a;-webkit-text-stroke:0.42px #1a1a1a;"><span style="font-size:9.25px;letter-spacing:0.25px">告警时间</span></div>
<div class="t" style="left:1004.0px;width:140px;text-align:center;top:6.0px;color:#1a1a1a;-webkit-text-stroke:0.42px #1a1a1a;"><span style="font-size:9.25px;letter-spacing:0.25px">漏洞类型</span></div>
<div class="t" style="left:1142.5px;top:6.0px;color:#1a1a1a;-webkit-text-stroke:0.42px #1a1a1a;"><span style="font-size:9.25px;letter-spacing:0.25px">漏洞</span></div>
<div class="t" style="left:-34.5px;width:140px;text-align:center;top:31.5px;color:#1a1a1a;-webkit-text-stroke:0.32px #1a1a1a;"><span style="font-size:9.2px;letter-spacing:0px;position:relative;top:-0.5px">1</span></div>
<div class="t" style="left:104.69999999999999px;width:140px;text-align:center;top:31.5px;color:#1a1a1a;-webkit-text-stroke:0.37px #1a1a1a;"><span style="font-size:9.7px;letter-spacing:0px;position:relative;top:-0.5px">2024–06–15–02</span></div>
<div class="t" style="left:248.7px;width:140px;text-align:center;top:31.5px;color:#1a1a1a;-webkit-text-stroke:0.20px #1a1a1a;"><span style="font-size:9.25px;letter-spacing:0.25px">某某某单位</span></div>
<div class="t" style="left:377.9px;width:140px;text-align:center;top:31.5px;color:#1a1a1a;-webkit-text-stroke:0.32px #1a1a1a;"><span style="font-size:9.2px;letter-spacing:0px;position:relative;top:-0.5px">202.102.120.35</span></div>
<div class="t" style="left:492.29999999999995px;width:140px;text-align:center;top:31.5px;color:#1a1a1a;"><span style="font-size:9.25px;letter-spacing:0.25px">地区</span><span style="font-size:9.2px;letter-spacing:0px;position:relative;top:-0.5px">xx</span><span style="font-size:9.25px;letter-spacing:0.25px">公司</span><span style="font-size:9.2px;letter-spacing:0px;position:relative;top:-0.5px">–1</span><span style="font-size:9.25px;letter-spacing:0.25px">组</span></div>
<div class="t" style="left:616.8px;width:140px;text-align:center;top:31.5px;color:#1a1a1a;"><span style="font-size:9.2px;letter-spacing:0px;position:relative;top:-0.5px">E1–</span><span style="font-size:9.25px;letter-spacing:0.25px">健康安全环保系统</span></div>
<div class="t" style="left:745.0px;width:140px;text-align:center;top:31.5px;color:#1a1a1a;-webkit-text-stroke:0.37px #1a1a1a;"><span style="font-size:9.4px;letter-spacing:0px;position:relative;top:-0.5px">11.8.43.73</span></div>
<div class="t" style="left:883.5999999999999px;width:140px;text-align:center;top:31.5px;color:#1a1a1a;"><span style="font-size:9.8px;letter-spacing:0px;position:relative;top:-0.5px">2024–06–11 09:57:47</span></div>
<div class="t" style="left:1003.8px;width:140px;text-align:center;top:31.5px;color:#1a1a1a;"><span style="font-size:9.5px;letter-spacing:-0.62px">发现脚本文件上传行为</span></div>
<div style="position:absolute;left:0px;top:51.300000000000026px;width:1149px;height:24.5px;background:#efefef;"></div>
<div class="t" style="left:-34.5px;width:140px;text-align:center;top:56.60000000000002px;color:#1a1a1a;-webkit-text-stroke:0.32px #1a1a1a;"><span style="font-size:9.2px;letter-spacing:0px;position:relative;top:-0.5px">2</span></div>
<div class="t" style="left:104.69999999999999px;width:140px;text-align:center;top:56.60000000000002px;color:#1a1a1a;-webkit-text-stroke:0.37px #1a1a1a;"><span style="font-size:9.7px;letter-spacing:0px;position:relative;top:-0.5px">2024–06–15–02</span></div>
<div class="t" style="left:248.7px;width:140px;text-align:center;top:56.60000000000002px;color:#1a1a1a;-webkit-text-stroke:0.20px #1a1a1a;"><span style="font-size:9.25px;letter-spacing:0.25px">某某某单位</span></div>
<div class="t" style="left:377.9px;width:140px;text-align:center;top:56.60000000000002px;color:#1a1a1a;-webkit-text-stroke:0.32px #1a1a1a;"><span style="font-size:9.2px;letter-spacing:0px;position:relative;top:-0.5px">202.102.120.35</span></div>
<div class="t" style="left:492.29999999999995px;width:140px;text-align:center;top:56.60000000000002px;color:#1a1a1a;"><span style="font-size:9.25px;letter-spacing:0.25px">地区</span><span style="font-size:9.2px;letter-spacing:0px;position:relative;top:-0.5px">xx</span><span style="font-size:9.25px;letter-spacing:0.25px">公司</span><span style="font-size:9.2px;letter-spacing:0px;position:relative;top:-0.5px">–1</span><span style="font-size:9.25px;letter-spacing:0.25px">组</span></div>
<div class="t" style="left:616.8px;width:140px;text-align:center;top:56.60000000000002px;color:#1a1a1a;"><span style="font-size:9.2px;letter-spacing:0px;position:relative;top:-0.5px">E1–</span><span style="font-size:9.25px;letter-spacing:0.25px">健康安全环保系统</span></div>
<div class="t" style="left:745.0px;width:140px;text-align:center;top:56.60000000000002px;color:#1a1a1a;-webkit-text-stroke:0.37px #1a1a1a;"><span style="font-size:9.4px;letter-spacing:0px;position:relative;top:-0.5px">11.8.43.73</span></div>
<div class="t" style="left:883.5999999999999px;width:140px;text-align:center;top:56.60000000000002px;color:#1a1a1a;"><span style="font-size:9.8px;letter-spacing:0px;position:relative;top:-0.5px">2024–06–11 09:57:47</span></div>
<div class="t" style="left:1003.8px;width:140px;text-align:center;top:56.60000000000002px;color:#1a1a1a;"><span style="font-size:9.5px;letter-spacing:-0.62px">发现脚本文件上传行为</span></div>
<div class="t" style="left:-34.5px;width:140px;text-align:center;top:81.70000000000005px;color:#1a1a1a;-webkit-text-stroke:0.32px #1a1a1a;"><span style="font-size:9.2px;letter-spacing:0px;position:relative;top:-0.5px">3</span></div>
<div class="t" style="left:104.69999999999999px;width:140px;text-align:center;top:81.70000000000005px;color:#1a1a1a;-webkit-text-stroke:0.37px #1a1a1a;"><span style="font-size:9.7px;letter-spacing:0px;position:relative;top:-0.5px">2024–06–15–02</span></div>
<div class="t" style="left:248.7px;width:140px;text-align:center;top:81.70000000000005px;color:#1a1a1a;-webkit-text-stroke:0.20px #1a1a1a;"><span style="font-size:9.25px;letter-spacing:0.25px">某某某单位</span></div>
<div class="t" style="left:377.9px;width:140px;text-align:center;top:81.70000000000005px;color:#1a1a1a;-webkit-text-stroke:0.32px #1a1a1a;"><span style="font-size:9.2px;letter-spacing:0px;position:relative;top:-0.5px">202.102.120.35</span></div>
<div class="t" style="left:492.29999999999995px;width:140px;text-align:center;top:81.70000000000005px;color:#1a1a1a;"><span style="font-size:9.25px;letter-spacing:0.25px">地区</span><span style="font-size:9.2px;letter-spacing:0px;position:relative;top:-0.5px">xx</span><span style="font-size:9.25px;letter-spacing:0.25px">公司</span><span style="font-size:9.2px;letter-spacing:0px;position:relative;top:-0.5px">–1</span><span style="font-size:9.25px;letter-spacing:0.25px">组</span></div>
<div class="t" style="left:616.8px;width:140px;text-align:center;top:81.70000000000005px;color:#1a1a1a;"><span style="font-size:9.2px;letter-spacing:0px;position:relative;top:-0.5px">E1–</span><span style="font-size:9.25px;letter-spacing:0.25px">健康安全环保系统</span></div>
<div class="t" style="left:745.0px;width:140px;text-align:center;top:81.70000000000005px;color:#1a1a1a;-webkit-text-stroke:0.37px #1a1a1a;"><span style="font-size:9.4px;letter-spacing:0px;position:relative;top:-0.5px">11.8.43.73</span></div>
<div class="t" style="left:883.5999999999999px;width:140px;text-align:center;top:81.70000000000005px;color:#1a1a1a;"><span style="font-size:9.8px;letter-spacing:0px;position:relative;top:-0.5px">2024–06–11 09:57:47</span></div>
<div class="t" style="left:1003.8px;width:140px;text-align:center;top:81.70000000000005px;color:#1a1a1a;"><span style="font-size:9.5px;letter-spacing:-0.62px">发现脚本文件上传行为</span></div>
<div style="position:absolute;left:0px;top:101.49999999999996px;width:1149px;height:24.5px;background:#efefef;"></div>
<div class="t" style="left:-34.5px;width:140px;text-align:center;top:106.79999999999995px;color:#1a1a1a;-webkit-text-stroke:0.32px #1a1a1a;"><span style="font-size:9.2px;letter-spacing:0px;position:relative;top:-0.5px">4</span></div>
<div class="t" style="left:104.69999999999999px;width:140px;text-align:center;top:106.79999999999995px;color:#1a1a1a;-webkit-text-stroke:0.37px #1a1a1a;"><span style="font-size:9.7px;letter-spacing:0px;position:relative;top:-0.5px">2024–06–15–02</span></div>
<div class="t" style="left:248.7px;width:140px;text-align:center;top:106.79999999999995px;color:#1a1a1a;-webkit-text-stroke:0.20px #1a1a1a;"><span style="font-size:9.25px;letter-spacing:0.25px">某某某单位</span></div>
<div class="t" style="left:377.9px;width:140px;text-align:center;top:106.79999999999995px;color:#1a1a1a;-webkit-text-stroke:0.32px #1a1a1a;"><span style="font-size:9.2px;letter-spacing:0px;position:relative;top:-0.5px">202.102.120.35</span></div>
<div class="t" style="left:492.29999999999995px;width:140px;text-align:center;top:106.79999999999995px;color:#1a1a1a;"><span style="font-size:9.25px;letter-spacing:0.25px">地区</span><span style="font-size:9.2px;letter-spacing:0px;position:relative;top:-0.5px">xx</span><span style="font-size:9.25px;letter-spacing:0.25px">公司</span><span style="font-size:9.2px;letter-spacing:0px;position:relative;top:-0.5px">–1</span><span style="font-size:9.25px;letter-spacing:0.25px">组</span></div>
<div class="t" style="left:616.8px;width:140px;text-align:center;top:106.79999999999995px;color:#1a1a1a;"><span style="font-size:9.2px;letter-spacing:0px;position:relative;top:-0.5px">E1–</span><span style="font-size:9.25px;letter-spacing:0.25px">健康安全环保系统</span></div>
<div class="t" style="left:745.0px;width:140px;text-align:center;top:106.79999999999995px;color:#1a1a1a;-webkit-text-stroke:0.37px #1a1a1a;"><span style="font-size:9.4px;letter-spacing:0px;position:relative;top:-0.5px">11.8.43.73</span></div>
<div class="t" style="left:883.5999999999999px;width:140px;text-align:center;top:106.79999999999995px;color:#1a1a1a;"><span style="font-size:9.8px;letter-spacing:0px;position:relative;top:-0.5px">2024–06–11 09:57:47</span></div>
<div class="t" style="left:1003.8px;width:140px;text-align:center;top:106.79999999999995px;color:#1a1a1a;"><span style="font-size:9.5px;letter-spacing:-0.62px">发现脚本文件上传行为</span></div>
<div class="t" style="left:-34.5px;width:140px;text-align:center;top:131.89999999999998px;color:#1a1a1a;-webkit-text-stroke:0.32px #1a1a1a;"><span style="font-size:9.2px;letter-spacing:0px;position:relative;top:-0.5px">5</span></div>
<div class="t" style="left:104.69999999999999px;width:140px;text-align:center;top:131.89999999999998px;color:#1a1a1a;-webkit-text-stroke:0.37px #1a1a1a;"><span style="font-size:9.7px;letter-spacing:0px;position:relative;top:-0.5px">2024–06–15–02</span></div>
<div class="t" style="left:248.7px;width:140px;text-align:center;top:131.89999999999998px;color:#1a1a1a;-webkit-text-stroke:0.20px #1a1a1a;"><span style="font-size:9.25px;letter-spacing:0.25px">某某某单位</span></div>
<div class="t" style="left:377.9px;width:140px;text-align:center;top:131.89999999999998px;color:#1a1a1a;-webkit-text-stroke:0.32px #1a1a1a;"><span style="font-size:9.2px;letter-spacing:0px;position:relative;top:-0.5px">202.102.120.35</span></div>
<div class="t" style="left:492.29999999999995px;width:140px;text-align:center;top:131.89999999999998px;color:#1a1a1a;"><span style="font-size:9.25px;letter-spacing:0.25px">地区</span><span style="font-size:9.2px;letter-spacing:0px;position:relative;top:-0.5px">xx</span><span style="font-size:9.25px;letter-spacing:0.25px">公司</span><span style="font-size:9.2px;letter-spacing:0px;position:relative;top:-0.5px">–1</span><span style="font-size:9.25px;letter-spacing:0.25px">组</span></div>
<div class="t" style="left:616.8px;width:140px;text-align:center;top:131.89999999999998px;color:#1a1a1a;"><span style="font-size:9.2px;letter-spacing:0px;position:relative;top:-0.5px">E1–</span><span style="font-size:9.25px;letter-spacing:0.25px">健康安全环保系统</span></div>
<div class="t" style="left:745.0px;width:140px;text-align:center;top:131.89999999999998px;color:#1a1a1a;-webkit-text-stroke:0.37px #1a1a1a;"><span style="font-size:9.4px;letter-spacing:0px;position:relative;top:-0.5px">11.8.43.73</span></div>
<div class="t" style="left:883.5999999999999px;width:140px;text-align:center;top:131.89999999999998px;color:#1a1a1a;"><span style="font-size:9.8px;letter-spacing:0px;position:relative;top:-0.5px">2024–06–11 09:57:47</span></div>
<div class="t" style="left:1003.8px;width:140px;text-align:center;top:131.89999999999998px;color:#1a1a1a;"><span style="font-size:9.5px;letter-spacing:-0.62px">发现脚本文件上传行为</span></div>
<div style="position:absolute;left:0px;top:151.7px;width:1149px;height:24.5px;background:#efefef;"></div>
<div class="t" style="left:-34.5px;width:140px;text-align:center;top:157.0px;color:#1a1a1a;-webkit-text-stroke:0.32px #1a1a1a;"><span style="font-size:9.2px;letter-spacing:0px;position:relative;top:-0.5px">6</span></div>
<div class="t" style="left:104.69999999999999px;width:140px;text-align:center;top:157.0px;color:#1a1a1a;-webkit-text-stroke:0.37px #1a1a1a;"><span style="font-size:9.7px;letter-spacing:0px;position:relative;top:-0.5px">2024–06–15–02</span></div>
<div class="t" style="left:248.7px;width:140px;text-align:center;top:157.0px;color:#1a1a1a;-webkit-text-stroke:0.20px #1a1a1a;"><span style="font-size:9.25px;letter-spacing:0.25px">某某某单位</span></div>
<div class="t" style="left:377.9px;width:140px;text-align:center;top:157.0px;color:#1a1a1a;-webkit-text-stroke:0.32px #1a1a1a;"><span style="font-size:9.2px;letter-spacing:0px;position:relative;top:-0.5px">202.102.120.35</span></div>
<div class="t" style="left:492.29999999999995px;width:140px;text-align:center;top:157.0px;color:#1a1a1a;"><span style="font-size:9.25px;letter-spacing:0.25px">地区</span><span style="font-size:9.2px;letter-spacing:0px;position:relative;top:-0.5px">xx</span><span style="font-size:9.25px;letter-spacing:0.25px">公司</span><span style="font-size:9.2px;letter-spacing:0px;position:relative;top:-0.5px">–1</span><span style="font-size:9.25px;letter-spacing:0.25px">组</span></div>
<div class="t" style="left:616.8px;width:140px;text-align:center;top:157.0px;color:#1a1a1a;"><span style="font-size:9.2px;letter-spacing:0px;position:relative;top:-0.5px">E1–</span><span style="font-size:9.25px;letter-spacing:0.25px">健康安全环保系统</span></div>
<div class="t" style="left:745.0px;width:140px;text-align:center;top:157.0px;color:#1a1a1a;-webkit-text-stroke:0.37px #1a1a1a;"><span style="font-size:9.4px;letter-spacing:0px;position:relative;top:-0.5px">11.8.43.73</span></div>
<div class="t" style="left:883.5999999999999px;width:140px;text-align:center;top:157.0px;color:#1a1a1a;"><span style="font-size:9.8px;letter-spacing:0px;position:relative;top:-0.5px">2024–06–11 09:57:47</span></div>
<div class="t" style="left:1003.8px;width:140px;text-align:center;top:157.0px;color:#1a1a1a;"><span style="font-size:9.5px;letter-spacing:-0.62px">发现脚本文件上传行为</span></div>
<div class="t" style="left:-34.5px;width:140px;text-align:center;top:182.10000000000002px;color:#1a1a1a;-webkit-text-stroke:0.32px #1a1a1a;"><span style="font-size:9.2px;letter-spacing:0px;position:relative;top:-0.5px">7</span></div>
<div class="t" style="left:104.69999999999999px;width:140px;text-align:center;top:182.10000000000002px;color:#1a1a1a;-webkit-text-stroke:0.37px #1a1a1a;"><span style="font-size:9.7px;letter-spacing:0px;position:relative;top:-0.5px">2024–06–15–02</span></div>
<div class="t" style="left:248.7px;width:140px;text-align:center;top:182.10000000000002px;color:#1a1a1a;-webkit-text-stroke:0.20px #1a1a1a;"><span style="font-size:9.25px;letter-spacing:0.25px">某某某单位</span></div>
<div class="t" style="left:377.9px;width:140px;text-align:center;top:182.10000000000002px;color:#1a1a1a;-webkit-text-stroke:0.32px #1a1a1a;"><span style="font-size:9.2px;letter-spacing:0px;position:relative;top:-0.5px">202.102.120.35</span></div>
<div class="t" style="left:492.29999999999995px;width:140px;text-align:center;top:182.10000000000002px;color:#1a1a1a;"><span style="font-size:9.25px;letter-spacing:0.25px">地区</span><span style="font-size:9.2px;letter-spacing:0px;position:relative;top:-0.5px">xx</span><span style="font-size:9.25px;letter-spacing:0.25px">公司</span><span style="font-size:9.2px;letter-spacing:0px;position:relative;top:-0.5px">–1</span><span style="font-size:9.25px;letter-spacing:0.25px">组</span></div>
<div class="t" style="left:616.8px;width:140px;text-align:center;top:182.10000000000002px;color:#1a1a1a;"><span style="font-size:9.2px;letter-spacing:0px;position:relative;top:-0.5px">E1–</span><span style="font-size:9.25px;letter-spacing:0.25px">健康安全环保系统</span></div>
<div class="t" style="left:745.0px;width:140px;text-align:center;top:182.10000000000002px;color:#1a1a1a;-webkit-text-stroke:0.37px #1a1a1a;"><span style="font-size:9.4px;letter-spacing:0px;position:relative;top:-0.5px">11.8.43.73</span></div>
<div class="t" style="left:883.5999999999999px;width:140px;text-align:center;top:182.10000000000002px;color:#1a1a1a;"><span style="font-size:9.8px;letter-spacing:0px;position:relative;top:-0.5px">2024–06–11 09:57:47</span></div>
<div class="t" style="left:1003.8px;width:140px;text-align:center;top:182.10000000000002px;color:#1a1a1a;"><span style="font-size:9.5px;letter-spacing:-0.62px">发现脚本文件上传行为</span></div>
<div style="position:absolute;left:0px;top:201.90000000000003px;width:1149px;height:24.5px;background:#efefef;"></div>
<div class="t" style="left:-34.5px;width:140px;text-align:center;top:207.20000000000005px;color:#1a1a1a;-webkit-text-stroke:0.32px #1a1a1a;"><span style="font-size:9.2px;letter-spacing:0px;position:relative;top:-0.5px">8</span></div>
<div class="t" style="left:104.69999999999999px;width:140px;text-align:center;top:207.20000000000005px;color:#1a1a1a;-webkit-text-stroke:0.37px #1a1a1a;"><span style="font-size:9.7px;letter-spacing:0px;position:relative;top:-0.5px">2024–06–15–02</span></div>
<div class="t" style="left:248.7px;width:140px;text-align:center;top:207.20000000000005px;color:#1a1a1a;-webkit-text-stroke:0.20px #1a1a1a;"><span style="font-size:9.25px;letter-spacing:0.25px">某某某单位</span></div>
<div class="t" style="left:377.9px;width:140px;text-align:center;top:207.20000000000005px;color:#1a1a1a;-webkit-text-stroke:0.32px #1a1a1a;"><span style="font-size:9.2px;letter-spacing:0px;position:relative;top:-0.5px">202.102.120.35</span></div>
<div class="t" style="left:492.29999999999995px;width:140px;text-align:center;top:207.20000000000005px;color:#1a1a1a;"><span style="font-size:9.25px;letter-spacing:0.25px">地区</span><span style="font-size:9.2px;letter-spacing:0px;position:relative;top:-0.5px">xx</span><span style="font-size:9.25px;letter-spacing:0.25px">公司</span><span style="font-size:9.2px;letter-spacing:0px;position:relative;top:-0.5px">–1</span><span style="font-size:9.25px;letter-spacing:0.25px">组</span></div>
<div class="t" style="left:616.8px;width:140px;text-align:center;top:207.20000000000005px;color:#1a1a1a;"><span style="font-size:9.2px;letter-spacing:0px;position:relative;top:-0.5px">E1–</span><span style="font-size:9.25px;letter-spacing:0.25px">健康安全环保系统</span></div>
<div class="t" style="left:745.0px;width:140px;text-align:center;top:207.20000000000005px;color:#1a1a1a;-webkit-text-stroke:0.37px #1a1a1a;"><span style="font-size:9.4px;letter-spacing:0px;position:relative;top:-0.5px">11.8.43.73</span></div>
<div class="t" style="left:883.5999999999999px;width:140px;text-align:center;top:207.20000000000005px;color:#1a1a1a;"><span style="font-size:9.8px;letter-spacing:0px;position:relative;top:-0.5px">2024–06–11 09:57:47</span></div>
<div class="t" style="left:1003.8px;width:140px;text-align:center;top:207.20000000000005px;color:#1a1a1a;"><span style="font-size:9.5px;letter-spacing:-0.62px">发现脚本文件上传行为</span></div>
<div class="t" style="left:-34.5px;width:140px;text-align:center;top:232.29999999999995px;color:#1a1a1a;-webkit-text-stroke:0.32px #1a1a1a;"><span style="font-size:9.2px;letter-spacing:0px;position:relative;top:-0.5px">9</span></div>
<div class="t" style="left:104.69999999999999px;width:140px;text-align:center;top:232.29999999999995px;color:#1a1a1a;-webkit-text-stroke:0.37px #1a1a1a;"><span style="font-size:9.7px;letter-spacing:0px;position:relative;top:-0.5px">2024–06–15–02</span></div>
<div class="t" style="left:248.7px;width:140px;text-align:center;top:232.29999999999995px;color:#1a1a1a;-webkit-text-stroke:0.20px #1a1a1a;"><span style="font-size:9.25px;letter-spacing:0.25px">某某某单位</span></div>
<div class="t" style="left:377.9px;width:140px;text-align:center;top:232.29999999999995px;color:#1a1a1a;-webkit-text-stroke:0.32px #1a1a1a;"><span style="font-size:9.2px;letter-spacing:0px;position:relative;top:-0.5px">202.102.120.35</span></div>
<div class="t" style="left:492.29999999999995px;width:140px;text-align:center;top:232.29999999999995px;color:#1a1a1a;"><span style="font-size:9.25px;letter-spacing:0.25px">地区</span><span style="font-size:9.2px;letter-spacing:0px;position:relative;top:-0.5px">xx</span><span style="font-size:9.25px;letter-spacing:0.25px">公司</span><span style="font-size:9.2px;letter-spacing:0px;position:relative;top:-0.5px">–1</span><span style="font-size:9.25px;letter-spacing:0.25px">组</span></div>
<div class="t" style="left:616.8px;width:140px;text-align:center;top:232.29999999999995px;color:#1a1a1a;"><span style="font-size:9.2px;letter-spacing:0px;position:relative;top:-0.5px">E1–</span><span style="font-size:9.25px;letter-spacing:0.25px">健康安全环保系统</span></div>
<div class="t" style="left:745.0px;width:140px;text-align:center;top:232.29999999999995px;color:#1a1a1a;-webkit-text-stroke:0.37px #1a1a1a;"><span style="font-size:9.4px;letter-spacing:0px;position:relative;top:-0.5px">11.8.43.73</span></div>
<div class="t" style="left:883.5999999999999px;width:140px;text-align:center;top:232.29999999999995px;color:#1a1a1a;"><span style="font-size:9.8px;letter-spacing:0px;position:relative;top:-0.5px">2024–06–11 09:57:47</span></div>
<div class="t" style="left:1003.8px;width:140px;text-align:center;top:232.29999999999995px;color:#1a1a1a;"><span style="font-size:9.5px;letter-spacing:-0.62px">发现脚本文件上传行为</span></div>
<div style="position:absolute;left:0px;top:252.09999999999997px;width:1149px;height:24.5px;background:#efefef;"></div>
<div class="t" style="left:-34.5px;width:140px;text-align:center;top:257.4px;color:#1a1a1a;-webkit-text-stroke:0.32px #1a1a1a;"><span style="font-size:9.2px;letter-spacing:0px;position:relative;top:-0.5px">10</span></div>
<div class="t" style="left:104.69999999999999px;width:140px;text-align:center;top:257.4px;color:#1a1a1a;-webkit-text-stroke:0.37px #1a1a1a;"><span style="font-size:9.7px;letter-spacing:0px;position:relative;top:-0.5px">2024–06–15–02</span></div>
<div class="t" style="left:248.7px;width:140px;text-align:center;top:257.4px;color:#1a1a1a;-webkit-text-stroke:0.20px #1a1a1a;"><span style="font-size:9.25px;letter-spacing:0.25px">某某某单位</span></div>
<div class="t" style="left:377.9px;width:140px;text-align:center;top:257.4px;color:#1a1a1a;-webkit-text-stroke:0.32px #1a1a1a;"><span style="font-size:9.2px;letter-spacing:0px;position:relative;top:-0.5px">202.102.120.35</span></div>
<div class="t" style="left:492.29999999999995px;width:140px;text-align:center;top:257.4px;color:#1a1a1a;"><span style="font-size:9.25px;letter-spacing:0.25px">地区</span><span style="font-size:9.2px;letter-spacing:0px;position:relative;top:-0.5px">xx</span><span style="font-size:9.25px;letter-spacing:0.25px">公司</span><span style="font-size:9.2px;letter-spacing:0px;position:relative;top:-0.5px">–1</span><span style="font-size:9.25px;letter-spacing:0.25px">组</span></div>
<div class="t" style="left:616.8px;width:140px;text-align:center;top:257.4px;color:#1a1a1a;"><span style="font-size:9.2px;letter-spacing:0px;position:relative;top:-0.5px">E1–</span><span style="font-size:9.25px;letter-spacing:0.25px">健康安全环保系统</span></div>
<div class="t" style="left:745.0px;width:140px;text-align:center;top:257.4px;color:#1a1a1a;-webkit-text-stroke:0.37px #1a1a1a;"><span style="font-size:9.4px;letter-spacing:0px;position:relative;top:-0.5px">11.8.43.73</span></div>
<div class="t" style="left:883.5999999999999px;width:140px;text-align:center;top:257.4px;color:#1a1a1a;"><span style="font-size:9.8px;letter-spacing:0px;position:relative;top:-0.5px">2024–06–11 09:57:47</span></div>
<div class="t" style="left:1003.8px;width:140px;text-align:center;top:257.4px;color:#1a1a1a;"><span style="font-size:9.5px;letter-spacing:-0.62px">发现脚本文件上传行为</span></div>
</div>
</div></body></html>
